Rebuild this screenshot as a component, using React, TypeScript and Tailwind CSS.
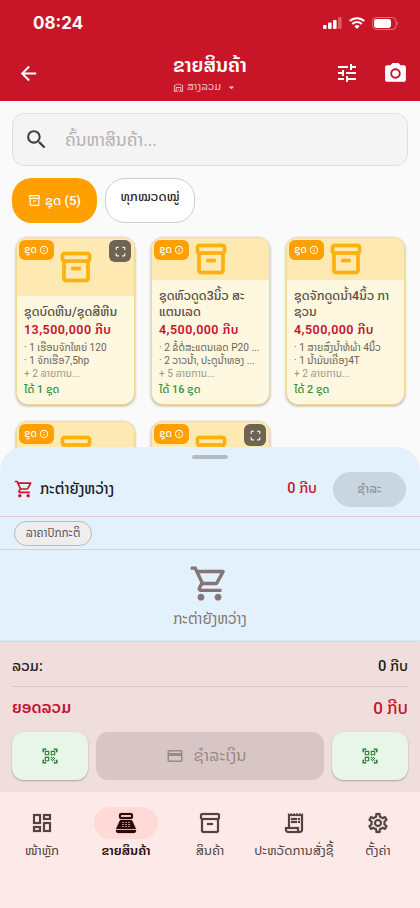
import type { ReactNode } from 'react'
import { clsx } from 'clsx'
import {
  MdArrowBack,
  MdArrowDropDown,
  MdCameraAlt,
  MdCropFree,
  MdInfoOutline,
  MdOutlineCreditCard,
  MdOutlineDashboard,
  MdOutlineInventory2,
  MdOutlineReceiptLong,
  MdOutlineSettings,
  MdOutlineShoppingCart,
  MdOutlineWarehouse,
  MdPointOfSale,
  MdQrCodeScanner,
  MdSearch,
  MdTune,
} from 'react-icons/md'

type Product = {
  title: string[]
  price?: string
  items?: string[]
  more?: string
  stock?: string
  expandable?: boolean
}

const products: Product[] = [
  {
    title: ['ຊຸດບົດຫີນ/ຊຸດສີຫີນ'],
    price: '13,500,000 ກີບ',
    items: ['1 ເຮືອນຈັກໃຫຍ່ 120', '1 ຈັກເຮືອ7,5hp'],
    more: '+ 2 ລາຍການ...',
    stock: 'ໄດ້ 1 ຊຸດ',
    expandable: true,
  },
  {
    title: ['ຊຸດຫົວດູດ3ນິ້ວ ສະ', 'ແຕນເລດ'],
    price: '4,500,000 ກີບ',
    items: ['2 ຂໍ້ຕໍ່ສະແຕນເລດ P20 ...', '2 ວາວນ້ຳ, ປະຕູນ້ຳທອງ ...'],
    more: '+ 5 ລາຍການ...',
    stock: 'ໄດ້ 16 ຊຸດ',
  },
  {
    title: ['ຊຸດຈັກດູດນ້ຳ4ນິ້ວ ກາ', 'ຊວນ'],
    price: '4,500,000 ກີບ',
    items: ['1 ສາຍສົ່ງນ້ຳທໍ່ຜ້າ 4ນິ້ວ', '1 ນ້ຳມັນເຄື່ອງ4T'],
    more: '+ 2 ລາຍການ...',
    stock: 'ໄດ້ 2 ຊຸດ',
  },
  { title: [] },
  { title: [], expandable: true },
]

const tabs = [
  { label: 'ໜ້າຫຼັກ', icon: MdOutlineDashboard },
  { label: 'ຂາຍສິນຄ້າ', icon: MdPointOfSale, active: true },
  { label: 'ສິນຄ້າ', icon: MdOutlineInventory2 },
  { label: 'ປະຫວັດການສັ່ງຊື້', icon: MdOutlineReceiptLong },
  { label: 'ຕັ້ງຄ່າ', icon: MdOutlineSettings },
]

function StatusBar() {
  return (
    <div className="flex h-[46px] items-center justify-between pr-[21px] pl-[33px]">
      <span className="font-[Inter] text-[17px] leading-5 font-bold">08:24</span>
      <div className="flex items-center gap-[7px]">
        <svg width="19" height="12" viewBox="0 0 19 12" fill="currentColor">
          <rect x="0" y="8" width="3.6" height="4" rx="1" />
          <rect x="5" y="5.5" width="3.6" height="6.5" rx="1" />
          <rect x="10" y="3" width="3.6" height="9" rx="1" />
          <rect x="15" y="0" width="3.6" height="12" rx="1" opacity="0.3" />
        </svg>
        <svg width="16" height="12" viewBox="0 0 16 12" fill="none" stroke="currentColor" strokeWidth="2.1">
          <path d="M0.8 4.1a10.4 10.4 0 0 1 14.4 0" />
          <path d="M3.3 6.9a6.8 6.8 0 0 1 9.4 0" />
          <path d="M8 12 5.4 9.3a3.8 3.8 0 0 1 5.2 0z" fill="currentColor" stroke="none" />
        </svg>
        <svg width="27" height="13" viewBox="0 0 27 13" fill="none">
          <rect x="0.5" y="0.5" width="23.5" height="12" rx="3.8" stroke="currentColor" opacity="0.4" />
          <rect x="2" y="2" width="17" height="9" rx="2.4" fill="currentColor" />
          <path d="M25.3 4.5c1 .4 1 3.6 0 4z" fill="currentColor" opacity="0.5" />
        </svg>
      </div>
    </div>
  )
}

function Header() {
  return (
    <header className="h-[101px] shrink-0 bg-[#c91528] text-white">
      <StatusBar />
      <div className="flex h-[54px] items-center px-[17px]">
        <MdArrowBack size={23} />
        <div className="ml-[133px] w-[78px] pt-[2px]">
          <h1 className="text-[19.5px] leading-[25px] font-semibold whitespace-nowrap">ຂາຍສິນຄ້າ</h1>
          <div className="flex h-[18px] items-center pt-px text-[10.8px] leading-4 whitespace-nowrap text-white/75">
            <MdOutlineWarehouse size={11} className="mr-[3px]" />
            ສາງລວມ
            <MdArrowDropDown size={13} className="ml-[4px]" />
          </div>
        </div>
        <MdTune size={24} className="ml-auto" />
        <MdCameraAlt size={25} className="ml-[24px] -mr-[5px]" />
      </div>
    </header>
  )
}

function ProductCard({ title, price, items = [], more, stock, expandable }: Product) {
  return (
    <article className="relative flex h-[168px] flex-col overflow-hidden rounded-xl border border-[#f4d98b] bg-[#fff8e1] shadow-[0_1px_3px_rgba(0,0,0,0.3)]">
      <div className="flex flex-1 items-center justify-center bg-[#ffe9b2]">
        <MdOutlineInventory2 size={36} className="stroke-[0.5px] text-[#fdb10e]" />
      </div>
      <div className={clsx('shrink-0 pl-[7px] whitespace-nowrap', title.length > 1 ? 'h-[124px]' : 'h-[108px]')}>
        <div className="pt-2 text-[12.5px] leading-4 font-medium text-[#57503f]">
          {title.map((line) => (
            <div key={line}>{line}</div>
          ))}
        </div>
        <div className="text-[12.5px] leading-5 font-semibold tracking-[0.45px] text-[#c41430]">{price}</div>
        <div className="pt-px text-[10.1px] leading-[13px] text-[#6b6454]">
          {items.map((item) => (
            <div key={item}>· {item}</div>
          ))}
          <div className="text-[#9c9686]">{more}</div>
        </div>
        <div className="pt-px text-[10.8px] leading-[18px] font-medium text-[#35913f]">{stock}</div>
      </div>
      <span className="absolute top-[2px] left-[2px] flex h-5 w-[35px] items-center justify-center gap-[2px] rounded-md bg-[#ffa000] text-[10px] leading-5 font-medium text-white">
        ຊຸດ
        <MdInfoOutline size={10} />
      </span>
      {expandable && (
        <span className="absolute top-[2px] right-[3px] flex size-[22px] items-center justify-center rounded-md bg-[#6d6451] text-white">
          <MdCropFree size={13} />
        </span>
      )}
    </article>
  )
}

function Catalog() {
  return (
    <main className="h-[370px] shrink-0 overflow-hidden bg-[#fafafa]">
      <div className="mx-3 mt-3 flex h-[53px] items-center rounded-xl border border-[#e0e0e0] bg-[#f4f4f4] pl-[11px]">
        <MdSearch size={25} className="text-[#443b3b]" />
        <span className="ml-4 text-[17.5px] leading-6 text-[#b3b0b0]">ຄົ້ນຫາສິນຄ້າ...</span>
      </div>
      <div className="mx-3 mt-3 flex h-[45px] gap-2 text-[13px] leading-5 whitespace-nowrap">
        <div className="flex w-[85px] items-center justify-center gap-1 rounded-[20px] bg-[#ffa000] font-medium text-white">
          <MdOutlineInventory2 size={13} />
          ຊຸດ (5)
        </div>
        <div className="flex w-[90px] justify-center rounded-[20px] border border-[#cfcccc] bg-white pt-[8px] font-medium text-[#2b2626]">
          ທຸກໝວດໝູ່
        </div>
      </div>
      <div className="mr-[15px] ml-4 mt-[14px] grid grid-cols-3 gap-4">
        {products.map((product, index) => (
          <ProductCard key={index} {...product} />
        ))}
      </div>
    </main>
  )
}

function CartSheet() {
  return (
    <section className="relative -mt-6 h-[195px] shrink-0 rounded-t-3xl bg-[#e3f1fc]">
      <div className="flex h-[24px] justify-center pt-2">
        <div className="h-1 w-9 rounded-full bg-[#b5bcc1]" />
      </div>
      <div className="flex h-[46px] items-start border-b border-[#dccbd3] px-[14px] text-[#c41430]">
        <div className="flex h-[36px] flex-1 items-center">
          <MdOutlineShoppingCart size={20} />
          <span className="ml-[6px] text-[15px] leading-5 font-medium text-[#1c1b1f]">ກະຕ່າຍັງຫວ່າງ</span>
          <span className="mr-4 ml-auto text-[14.5px] leading-5 font-medium">0 ກີບ</span>
          <span className="flex h-[35px] w-[73px] items-center justify-center rounded-full bg-[#c9d5df] text-[12.5px] leading-5 font-medium text-[#89949c]">
            ຊຳລະ
          </span>
        </div>
      </div>
      <div className="flex h-[33px] items-center border-b border-[#d5d3da] pl-[14px]">
        <span className="flex h-[25px] w-[78px] items-center justify-center rounded-full border border-[#b9babb] bg-[#eeeeee] text-[11.5px] leading-4 whitespace-nowrap text-[#5a5556]">
          ລາຄາປົກກະຕິ
        </span>
      </div>
      <div className="flex flex-col items-center pt-[13px] text-[#857673]">
        <MdOutlineShoppingCart size={41} className="-ml-[2px]" />
        <span className="mt-[5px] text-[15px] leading-5">ກະຕ່າຍັງຫວ່າງ</span>
      </div>
    </section>
  )
}

function SoftButton({ children }: { children: ReactNode }) {
  return (
    <button className="flex w-[76px] items-center justify-center rounded-xl bg-[#e8f5e9] text-[#2e7d32] shadow-[0_1px_2px_rgba(0,0,0,0.28)]">
      {children}
    </button>
  )
}

function Summary() {
  return (
    <section className="relative h-[150px] shrink-0 bg-[#f0dedd] px-3 shadow-[0_-1px_2px_rgba(0,0,0,0.12)]">
      <div className="flex h-[45px] items-center justify-between border-b border-[#d6c5c5] pt-[3px] text-[14.7px] leading-5 font-medium text-[#231a1a]">
        <span>ລວມ:</span>
        <span>0 ກີບ</span>
      </div>
      <div className="flex h-[45px] items-center justify-between pb-[3px] text-[17px] leading-6 font-medium text-[#c41430]">
        <span className="text-[16px] font-semibold">ຍອດລວມ</span>
        <span>0 ກີບ</span>
      </div>
      <div className="flex h-[48px] gap-2">
        <SoftButton>
          <MdQrCodeScanner size={18} />
        </SoftButton>
        <button className="flex flex-1 items-center justify-center gap-[9px] rounded-xl bg-[#d8c6c6] pr-[7px] text-[16.6px] leading-6 text-[#998989]">
          <MdOutlineCreditCard size={18} />
          ຊຳລະເງິນ
        </button>
        <SoftButton>
          <MdQrCodeScanner size={18} />
        </SoftButton>
      </div>
    </section>
  )
}

function TabBar() {
  return (
    <nav className="relative grid h-[116px] shrink-0 grid-cols-5 bg-[#fdeae8] pt-[15px]">
      {tabs.map(({ label, icon: Icon, active }) => (
        <div
          key={label}
          className={clsx('flex flex-col items-center', active ? 'font-semibold text-[#2b0a0a]' : 'text-[#534341]')}
        >
          <span className={clsx('flex h-8 w-16 items-center justify-center rounded-full', active && 'bg-[#ffdad7]')}>
            <Icon size={24} className="stroke-[0.2px]" />
          </span>
          <span className="mt-1 text-[13px] leading-4 whitespace-nowrap">{label}</span>
        </div>
      ))}
    </nav>
  )
}

export default function App() {
  return (
    <div className="flex h-[908px] w-[420px] flex-col overflow-hidden bg-[#fafafa] font-[Roboto,'Noto_Sans_Lao','DejaVu_Sans',sans-serif] [&_path[fill=none]]:stroke-none">
      <Header />
      <Catalog />
      <CartSheet />
      <Summary />
      <TabBar />
    </div>
  )
}
